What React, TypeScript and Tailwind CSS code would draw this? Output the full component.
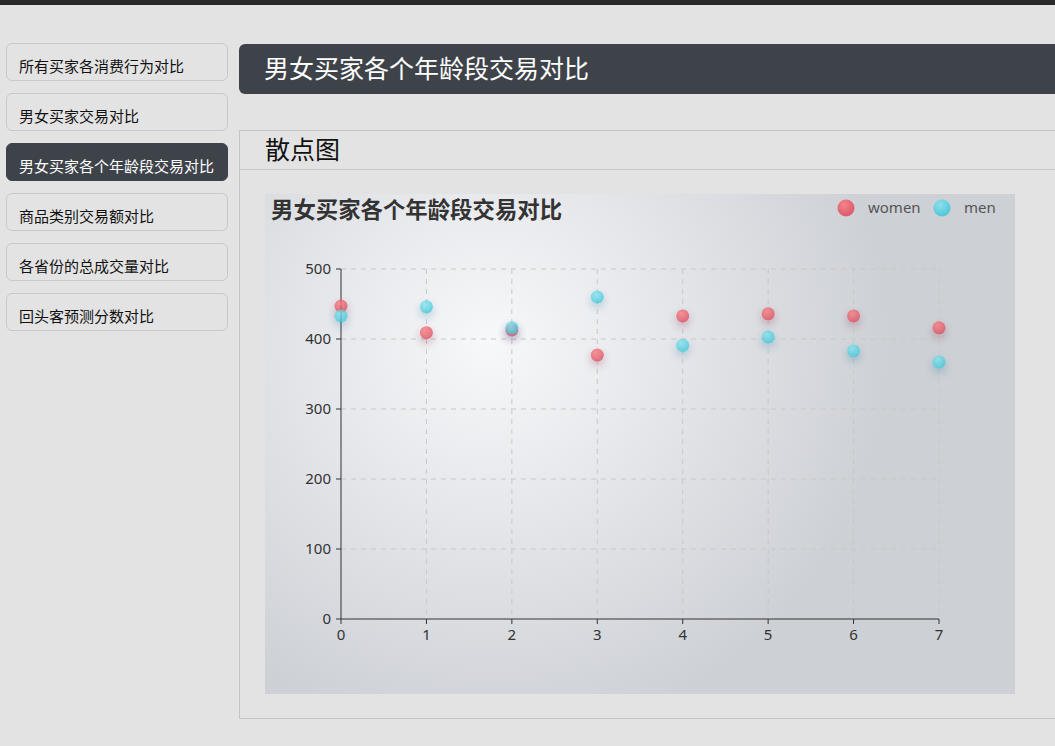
import React from "react";

const menuItems = [
  "所有买家各消费行为对比",
  "男女买家交易对比",
  "男女买家各个年龄段交易对比",
  "商品类别交易额对比",
  "各省份的总成交量对比",
  "回头客预测分数对比",
];

const women = [447, 409, 413, 377, 433, 436, 433, 416];
const men = [433, 446, 416, 460, 391, 403, 383, 367];

// chart geometry (750 x 500 canvas)
const X0 = 76;
const X7 = 674;
const Y0 = 425;
const Y500 = 75;
const xPos = (i: number) => X0 + ((X7 - X0) / 7) * i;
const yPos = (v: number) => Y0 - ((Y0 - Y500) / 500) * v;

function ScatterChart() {
  const font = '"Microsoft YaHei", "Noto Sans", "Noto Sans CJK SC", sans-serif';
  return (
    <svg width={750} height={500} className="block" style={{ fontFamily: font }}>
      <defs>
        <radialGradient id="bg" gradientUnits="userSpaceOnUse" cx={225} cy={150} r={400}>
          <stop offset="0" stopColor="#f7f8fa" />
          <stop offset="1" stopColor="#cdd0d5" />
        </radialGradient>
        <radialGradient id="red" cx="0.4" cy="0.3" r="1">
          <stop offset="0" stopColor="rgb(251,118,123)" />
          <stop offset="1" stopColor="rgb(204,46,72)" />
        </radialGradient>
        <radialGradient id="blue" cx="0.4" cy="0.3" r="1">
          <stop offset="0" stopColor="rgb(129,227,238)" />
          <stop offset="1" stopColor="rgb(25,183,207)" />
        </radialGradient>
        <filter id="shRed" x="-100%" y="-100%" width="300%" height="300%">
          <feDropShadow dx="0" dy="4" stdDeviation="4" floodColor="rgb(120,36,50)" floodOpacity="0.35" />
        </filter>
        <filter id="shBlue" x="-100%" y="-100%" width="300%" height="300%">
          <feDropShadow dx="0" dy="4" stdDeviation="4" floodColor="rgb(25,100,150)" floodOpacity="0.35" />
        </filter>
      </defs>
      <rect width={750} height={500} fill="url(#bg)" />

      <text x={6} y={24} fontSize={22.4} fontWeight={700} fill="#333">
        男女买家各个年龄段交易对比
      </text>

      {/* legend */}
      <circle cx={581} cy={14} r={8.5} fill="url(#red)" opacity={0.85} />
      <text x={603} y={19} fontSize={15} fill="#555">women</text>
      <circle cx={677} cy={14} r={8.5} fill="url(#blue)" opacity={0.85} />
      <text x={699} y={19} fontSize={15} fill="#555">men</text>

      {/* grid */}
      {[1, 2, 3, 4, 5].map((k) => (
        <line
          key={"h" + k}
          x1={X0}
          x2={X7}
          y1={yPos(k * 100)}
          y2={yPos(k * 100)}
          stroke="#c8c8c8"
          strokeDasharray="5 5"
        />
      ))}
      {[1, 2, 3, 4, 5, 6, 7].map((i) => (
        <line
          key={"v" + i}
          x1={xPos(i)}
          x2={xPos(i)}
          y1={Y500}
          y2={Y0}
          stroke="#c8c8c8"
          strokeDasharray="5 5"
        />
      ))}

      {/* axes */}
      <line x1={X0} x2={X0} y1={Y500} y2={Y0} stroke="#333" />
      <line x1={X0} x2={X7} y1={Y0} y2={Y0} stroke="#333" />
      {[0, 1, 2, 3, 4, 5].map((k) => (
        <g key={"yl" + k}>
          <line x1={X0 - 5} x2={X0} y1={yPos(k * 100)} y2={yPos(k * 100)} stroke="#333" />
          <text x={X0 - 10} y={yPos(k * 100) + 5} fontSize={15} fill="#333" textAnchor="end">
            {k * 100}
          </text>
        </g>
      ))}
      {[0, 1, 2, 3, 4, 5, 6, 7].map((i) => (
        <g key={"xl" + i}>
          <line x1={xPos(i)} x2={xPos(i)} y1={Y0} y2={Y0 + 5} stroke="#333" />
          <text x={xPos(i)} y={Y0 + 21} fontSize={15} fill="#333" textAnchor="middle">
            {i}
          </text>
        </g>
      ))}

      {/* series */}
      {women.map((v, i) => (
        <circle
          key={"w" + i}
          cx={xPos(i)}
          cy={yPos(v)}
          r={6.5}
          fill="url(#red)"
          opacity={0.75}
          filter="url(#shRed)"
        />
      ))}
      {men.map((v, i) => (
        <circle
          key={"m" + i}
          cx={xPos(i)}
          cy={yPos(v)}
          r={6.5}
          fill="url(#blue)"
          opacity={0.75}
          filter="url(#shBlue)"
        />
      ))}
    </svg>
  );
}

export default function App() {
  const active = 2;
  return (
    <div
      className="w-screen h-[746px] overflow-hidden bg-[#e3e3e3] text-[#111]"
      style={{ fontFamily: '"Microsoft YaHei", "Noto Sans", "Noto Sans CJK SC", sans-serif' }}
    >
      <div className="h-[5px] bg-[#2a2a2a]" />
      <div className="flex gap-[11px] pl-[6px] pt-[38px]">
        {/* sidebar */}
        <div className="w-[222px] shrink-0 flex flex-col gap-[12px]">
          {menuItems.map((item, i) => (
            <div
              key={item}
              className={
                i === active
                  ? "h-[38px] rounded-[6px] border border-[#3e434a] bg-[#3e434a] text-white text-[15px] leading-[20px] pt-[12px] px-[12px] whitespace-nowrap"
                  : "h-[38px] rounded-[6px] border border-[#c9c9c9] text-[#111] text-[15px] leading-[20px] pt-[12px] px-[12px] whitespace-nowrap"
              }
            >
              {item}
            </div>
          ))}
        </div>

        {/* main */}
        <div className="w-[840px] shrink-0 pt-px">
          <div className="h-[50px] rounded-l-[6px] bg-[#3e434a] flex items-center px-[25px] text-white text-[25px]">
            男女买家各个年龄段交易对比
          </div>
          <div className="mt-[36px] border border-[#c4c4c4] h-[589px]">
            <div className="h-[39px] border-b border-[#c8c8c8] px-[25px] flex items-center text-[25px] text-[#111]">
              散点图
            </div>
            <div className="pl-[25px] pt-[24px]">
              <ScatterChart />
            </div>
          </div>
        </div>
      </div>
    </div>
  );
}
